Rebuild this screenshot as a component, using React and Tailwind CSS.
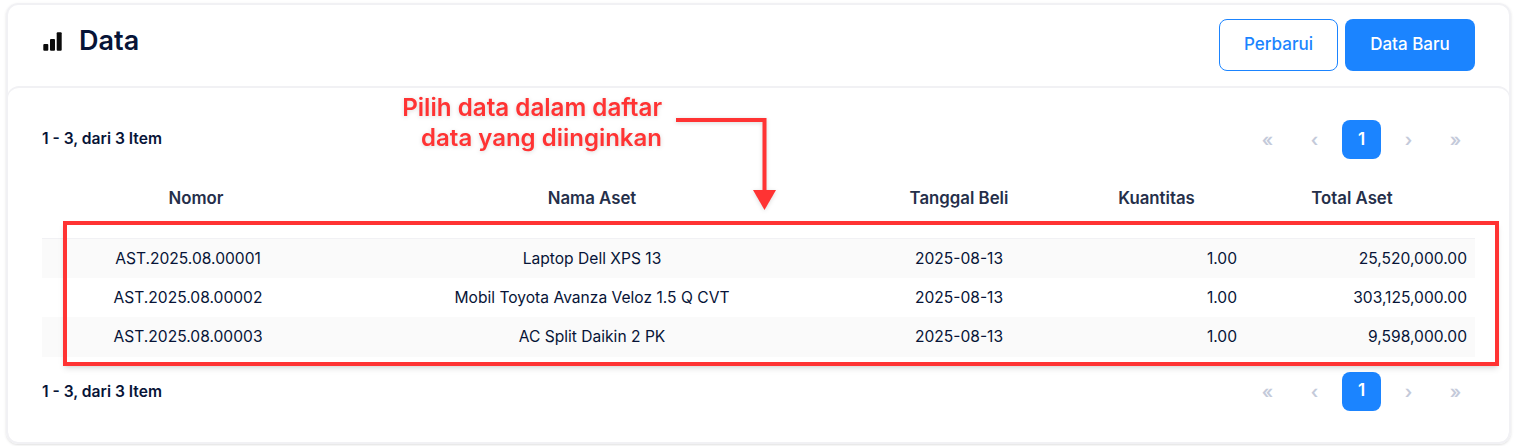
const rows = [
  ['AST.2025.08.00001', 'Laptop Dell XPS 13', '2025-08-13', '1.00', '25,520,000.00'],
  ['AST.2025.08.00002', 'Mobil Toyota Avanza Veloz 1.5 Q CVT', '2025-08-13', '1.00', '303,125,000.00'],
  ['AST.2025.08.00003', 'AC Split Daikin 2 PK', '2025-08-13', '1.00', '9,598,000.00'],
];

function Pager() {
  return (
    <div className="flex items-center gap-2 text-[18px] font-semibold text-[#c4cada]">
      <span className="w-[39px] h-[39px] flex items-center justify-center">«</span>
      <span className="w-[39px] h-[39px] flex items-center justify-center">‹</span>
      <span className="w-[39px] h-[39px] flex items-center justify-center rounded-lg bg-[#1b84ff] text-[17px] text-white">1</span>
      <span className="w-[39px] h-[39px] flex items-center justify-center">›</span>
      <span className="w-[39px] h-[39px] flex items-center justify-center">»</span>
    </div>
  );
}

function Summary({ textClass }) {
  return (
    <div className="flex items-center justify-between h-[39px]">
      <p className={`text-[15.6px] leading-[22px] font-semibold text-[#071437] ${textClass}`}>1 - 3, dari 3 Item</p>
      <Pager />
    </div>
  );
}

export default function App() {
  return (
    <div className="relative w-[1517px] h-[446px] overflow-hidden bg-white font-['Inter',sans-serif] px-[6px] pt-[3px]">
      <div className="h-[441px] rounded-xl border-2 border-[#f1f1f4] shadow-sm">
        {/* header */}
        <div className="h-[81px] flex items-start justify-between pl-[35px] pr-[34px] pt-[14px]">
          <div className="flex items-center gap-[16px] h-[43px]">
            <svg width="20" height="21" viewBox="0 0 20 21" className="fill-[#0b0b0b]">
              <rect x="0.300" y="14" width="5" height="6.700" rx="1" />
              <rect x="7" y="9" width="5" height="11.700" rx="1" />
              <rect x="13.700" y="2.300" width="5" height="18.400" rx="1" />
            </svg>
            <h1 className="text-[27px] font-semibold text-[#071437] mt-[2px]">Data</h1>
          </div>
          <div className="flex gap-[7px]">
            <button className="w-[119px] h-[52px] rounded-lg border border-[#1b84ff] text-[17px] font-medium text-[#1b84ff]">Perbarui</button>
            <button className="w-[130px] h-[52px] rounded-lg bg-[#1b84ff] text-[17px] font-medium text-white">Data Baru</button>
          </div>
        </div>

        {/* table card */}
        <div className="h-[357px] -mx-[1px] rounded-xl border-t-2 border-x border-[#f1f1f4] px-[34px] pt-[32px]">
          <Summary textClass="-mt-[2px]" />
          <table className="w-full table-fixed mt-[20px] text-[#071437]">
            <colgroup>
              <col className="w-[292px]" />
              <col className="w-[516px]" />
              <col className="w-[218px]" />
              <col className="w-[177px]" />
              <col className="w-[230px]" />
            </colgroup>
            <thead>
              <tr className="h-[39px] text-[16.8px] text-[#252f4a]">
                <th className="pl-4 font-semibold">Nomor</th>
                <th className="font-semibold">Nama Aset</th>
                <th className="font-semibold">Tanggal Beli</th>
                <th className="font-semibold">Kuantitas</th>
                <th className="pr-4 font-semibold">Total Aset</th>
              </tr>
              <tr className="h-[20px] border-b border-[#f1f1f4]">
                <th colSpan={5} />
              </tr>
            </thead>
            <tbody className="text-[15.6px]">
              {rows.map((r) => (
                <tr key={r[0]} className="h-[39.5px] even:bg-white odd:bg-[#fafafa] first:[&>td]:pt-px">
                  <td className="text-center">{r[0]}</td>
                  <td className="text-center">{r[1]}</td>
                  <td className="text-center">{r[2]}</td>
                  <td className="text-right pr-2">{r[3]}</td>
                  <td className="text-right pr-2">{r[4]}</td>
                </tr>
              ))}
            </tbody>
          </table>
          <div className="mt-[15px]">
            <Summary textClass="mt-[2px]" />
          </div>
        </div>
      </div>

      {/* annotation overlay */}
      <div className="absolute left-[63px] top-[221px] w-[1436px] h-[145px] border-4 border-[#ff3333] shadow-md" />
      <p className="absolute right-[855px] top-[93px] text-right text-[24.2px] leading-[30px] font-semibold text-[#ff3333] drop-shadow-sm">
        Pilih data dalam daftar
        <br />
        <span className="text-[24px]">data yang diinginkan</span>
      </p>
      <svg className="absolute left-[676px] top-[117px] drop-shadow-sm" width="102" height="94" viewBox="0 0 102 94">
        <path d="M0 3H88.500V75" fill="none" stroke="#ff3333" strokeWidth="4" />
        <path d="M77 73H100L88.500 93Z" fill="#ff3333" />
      </svg>
    </div>
  );
}
